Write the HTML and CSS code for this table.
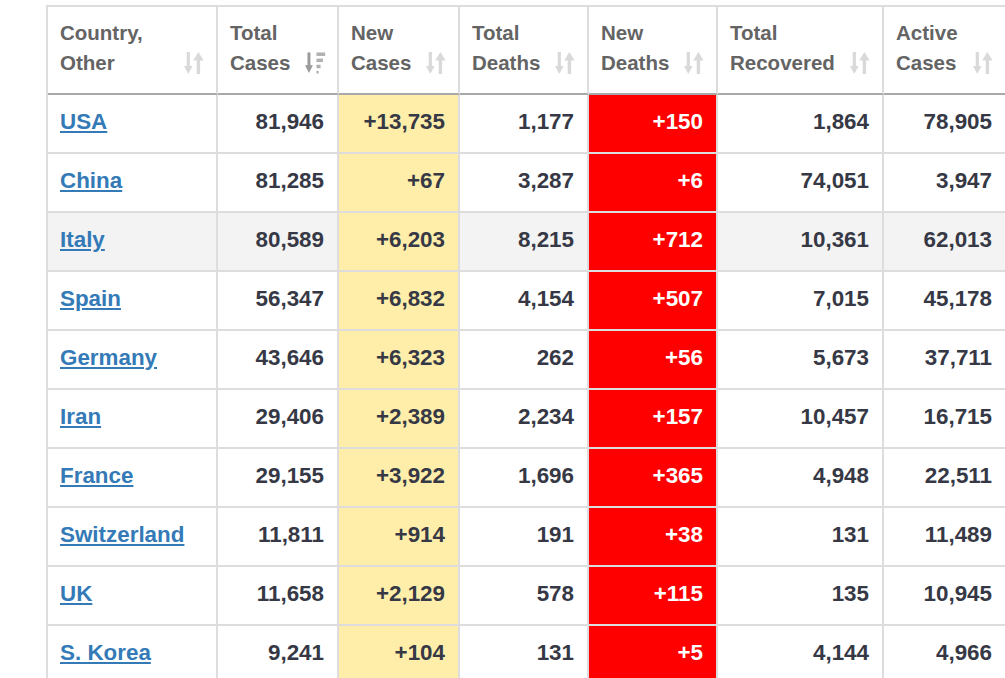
FILE: index.html
```html
<!DOCTYPE html>
<html>
<head>
<meta charset="utf-8">
<link rel="stylesheet" href="styles.css">
</head>
<body>
<table class="cases">
  <thead>
    <tr>
      <th class="c1"><div class="hd"><span>Country,<br>Other</span><svg class="sort" viewBox="0 0 20 22"><rect x="2.7" y="0" width="3.2" height="15"/><polygon points="0,14 8.6,14 4.3,22"/><rect x="12.7" y="7" width="3.4" height="15"/><polygon points="9.2,8.5 19.6,8.5 14.4,0"/></svg></div></th>
      <th class="c2"><div class="hd"><span>Total<br>Cases</span><svg class="sort active" viewBox="0 0 24 23"><rect class="ar" x="2.7" y="0" width="3.2" height="15"/><polygon class="ar" points="0,14 8.6,14 4.3,22.5"/><rect class="br" x="12.5" y="0" width="9.5" height="3.8"/><rect class="br" x="12.5" y="6.7" width="7" height="3.8"/><rect class="br" x="12.5" y="13.4" width="4.5" height="3.8"/><rect class="br" x="12.5" y="20" width="2.4" height="3"/></svg></div></th>
      <th class="c3"><div class="hd"><span>New<br>Cases</span><svg class="sort" viewBox="0 0 20 22"><rect x="2.7" y="0" width="3.2" height="15"/><polygon points="0,14 8.6,14 4.3,22"/><rect x="12.7" y="7" width="3.4" height="15"/><polygon points="9.2,8.5 19.6,8.5 14.4,0"/></svg></div></th>
      <th class="c4"><div class="hd"><span>Total<br>Deaths</span><svg class="sort" viewBox="0 0 20 22"><rect x="2.7" y="0" width="3.2" height="15"/><polygon points="0,14 8.6,14 4.3,22"/><rect x="12.7" y="7" width="3.4" height="15"/><polygon points="9.2,8.5 19.6,8.5 14.4,0"/></svg></div></th>
      <th class="c5"><div class="hd"><span>New<br>Deaths</span><svg class="sort" viewBox="0 0 20 22"><rect x="2.7" y="0" width="3.2" height="15"/><polygon points="0,14 8.6,14 4.3,22"/><rect x="12.7" y="7" width="3.4" height="15"/><polygon points="9.2,8.5 19.6,8.5 14.4,0"/></svg></div></th>
      <th class="c6"><div class="hd"><span>Total<br>Recovered</span><svg class="sort" viewBox="0 0 20 22"><rect x="2.7" y="0" width="3.2" height="15"/><polygon points="0,14 8.6,14 4.3,22"/><rect x="12.7" y="7" width="3.4" height="15"/><polygon points="9.2,8.5 19.6,8.5 14.4,0"/></svg></div></th>
      <th class="c7"><div class="hd"><span>Active<br>Cases</span><svg class="sort" viewBox="0 0 20 22"><rect x="2.7" y="0" width="3.2" height="15"/><polygon points="0,14 8.6,14 4.3,22"/><rect x="12.7" y="7" width="3.4" height="15"/><polygon points="9.2,8.5 19.6,8.5 14.4,0"/></svg></div></th>
    </tr>
  </thead>
  <tbody>
    <tr><td class="name"><a href="#">USA</a></td><td>81,946</td><td class="newc">+13,735</td><td>1,177</td><td class="newd">+150</td><td>1,864</td><td>78,905</td></tr>
    <tr><td class="name"><a href="#">China</a></td><td>81,285</td><td class="newc">+67</td><td>3,287</td><td class="newd">+6</td><td>74,051</td><td>3,947</td></tr>
    <tr class="hover"><td class="name"><a href="#">Italy</a></td><td>80,589</td><td class="newc">+6,203</td><td>8,215</td><td class="newd">+712</td><td>10,361</td><td>62,013</td></tr>
    <tr><td class="name"><a href="#">Spain</a></td><td>56,347</td><td class="newc">+6,832</td><td>4,154</td><td class="newd">+507</td><td>7,015</td><td>45,178</td></tr>
    <tr><td class="name"><a href="#">Germany</a></td><td>43,646</td><td class="newc">+6,323</td><td>262</td><td class="newd">+56</td><td>5,673</td><td>37,711</td></tr>
    <tr><td class="name"><a href="#">Iran</a></td><td>29,406</td><td class="newc">+2,389</td><td>2,234</td><td class="newd">+157</td><td>10,457</td><td>16,715</td></tr>
    <tr><td class="name"><a href="#">France</a></td><td>29,155</td><td class="newc">+3,922</td><td>1,696</td><td class="newd">+365</td><td>4,948</td><td>22,511</td></tr>
    <tr><td class="name"><a href="#">Switzerland</a></td><td>11,811</td><td class="newc">+914</td><td>191</td><td class="newd">+38</td><td>131</td><td>11,489</td></tr>
    <tr><td class="name"><a href="#">UK</a></td><td>11,658</td><td class="newc">+2,129</td><td>578</td><td class="newd">+115</td><td>135</td><td>10,945</td></tr>
    <tr><td class="name"><a href="#">S. Korea</a></td><td>9,241</td><td class="newc">+104</td><td>131</td><td class="newd">+5</td><td>4,144</td><td>4,966</td></tr>
  </tbody>
</table>
</body>
</html>
```
FILE: styles.css
```css
html, body {
  margin: 0;
  padding: 0;
  overflow: hidden;
  background: #fff;
}
body {
  font-family: "Liberation Sans", Arial, sans-serif;
}
.cases {
  margin: 5px 0 0 46px;
  border-collapse: separate;
  border-spacing: 0;
  table-layout: fixed;
  width: 961px;
  border-left: 2px solid #dddddd;
  border-top: 2px solid #dddddd;
}
.cases th, .cases td {
  box-sizing: border-box;
  border-right: 2px solid #dddddd;
  border-bottom: 2px solid #dddddd;
}
.c1 { width: 170px; }
.c2 { width: 121px; }
.c3 { width: 121px; }
.c4 { width: 129px; }
.c5 { width: 129px; }
.c6 { width: 166px; }
.c7 { width: 123px; }
.cases th {
  text-align: left;
  font-size: 20.5px;
  font-weight: bold;
  color: #646464;
  line-height: 30px;
  padding: 11px 12px 15px 12px;
  vertical-align: bottom;
  border-bottom: 2px solid #a9a9a9;
}
.hd {
  display: flex;
  justify-content: space-between;
  align-items: flex-end;
}
.sort {
  width: 20px;
  height: 22px;
  margin-bottom: 4px;
  flex: none;
  fill: #d9d9d9;
}
.sort.active {
  width: 22px;
  height: 22px;
  margin-right: -2px;
}
.sort .ar { fill: #9a9a9a; }
.sort .br { fill: #b0b0b0; }
.cases td {
  font-size: 22.4px;
  font-weight: bold;
  color: #363945;
  line-height: 25px;
  padding: 14px 13px 18px 12px;
  text-align: right;
  white-space: nowrap;
}
.cases td.name {
  text-align: left;
}
.cases td a {
  color: #337ab7;
  text-decoration: underline;
}
.cases tr.hover td {
  background: #f3f3f3;
}
.cases td.newc, .cases tr.hover td.newc {
  background: #ffeeaa;
}
.cases td.newd, .cases tr.hover td.newd {
  background: #ff0000;
  color: #ffffff;
}
```
